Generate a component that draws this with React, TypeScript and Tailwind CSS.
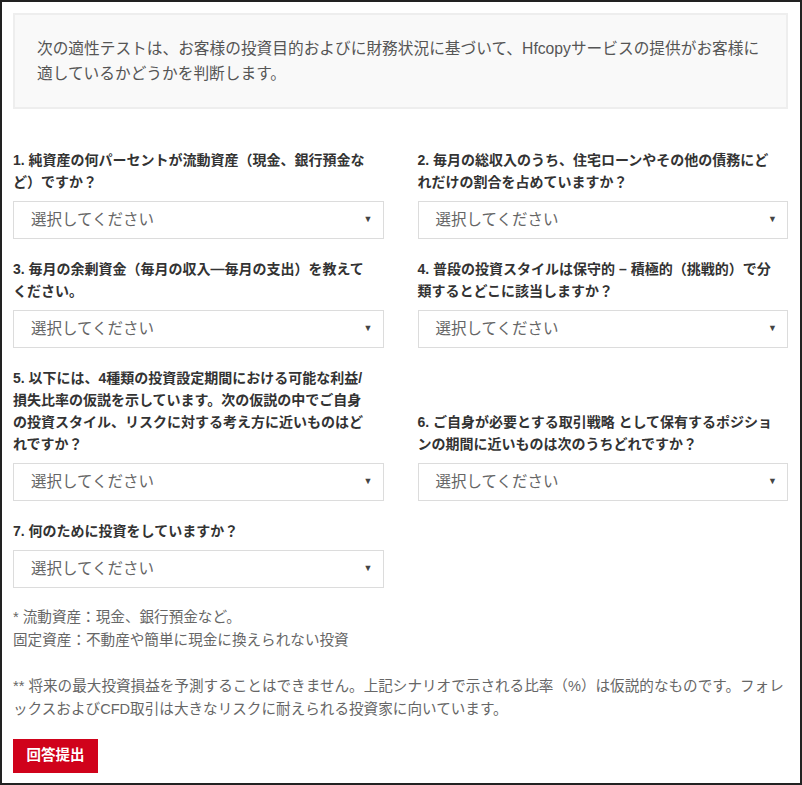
const font = {
  fontFamily: '"Liberation Sans", "Noto Sans CJK JP", sans-serif',
};

type Question = { lines: string[] };

const questions: Question[] = [
  { lines: ["1. 純資産の何パーセントが流動資産（現金、銀行預金な", "ど）ですか？"] },
  { lines: ["2. 毎月の総収入のうち、住宅ローンやその他の債務にど", "れだけの割合を占めていますか？"] },
  { lines: ["3. 毎月の余剰資金（毎月の収入—毎月の支出）を教えて", "ください。"] },
  { lines: ["4. 普段の投資スタイルは保守的 – 積極的（挑戦的）で分", "類するとどこに該当しますか？"] },
  {
    lines: [
      "5. 以下には、4種類の投資設定期間における可能な利益/",
      "損失比率の仮説を示しています。次の仮説の中でご自身",
      "の投資スタイル、リスクに対する考え方に近いものはど",
      "れですか？",
    ],
  },
  { lines: ["6. ご自身が必要とする取引戦略 として保有するポジショ", "ンの期間に近いものは次のうちどれですか？"] },
  { lines: ["7. 何のために投資をしていますか？"] },
];

function SelectBox() {
  return (
    <div className="flex h-[38px] items-center justify-between border border-[#dcdcdc] bg-white pl-[17px] pr-[10px]">
      <span className="text-[15.5px] text-[#666]">選択してください</span>
      <span className="text-[9px] text-[#444]">▼</span>
    </div>
  );
}

function QuestionField({ q }: { q: Question }) {
  return (
    <div className="flex flex-col">
      <label className="mb-[8px] text-[14px] font-bold leading-[22px] text-[#333]">
        {q.lines.map((l, i) => (
          <span key={i} className="block whitespace-nowrap">
            {l}
          </span>
        ))}
      </label>
      <SelectBox />
    </div>
  );
}

export default function App() {
  return (
    <div
      className="box-border h-[785px] w-[802px] border-2 border-[#222] bg-white pl-[11px] pr-[12px] pt-[11px]"
      style={font}
    >
      {/* intro */}
      <div className="border-2 border-[#eeeeee] bg-[#f9f9f9] px-[22px] py-[21px] text-[15.7px] leading-[25px] text-[#555]">
        次の適性テストは、お客様の投資目的およびに財務状況に基づいて、Hfcopyサービスの提供がお客様に
        <br />
        適しているかどうかを判断します。
      </div>

      {/* questions */}
      <div className="mt-[40px] grid grid-cols-2 items-end gap-x-[34px] gap-y-[19px]">
        {questions.map((q, i) => (
          <QuestionField key={i} q={q} />
        ))}
      </div>

      {/* notes */}
      <p className="mt-[18px] text-[14.6px] leading-[23px] text-[#666]">
        * 流動資産：現金、銀行預金など。
        <br />
        固定資産：不動産や簡単に現金に換えられない投資
        <br />
        <br />
        ** 将来の最大投資損益を予測することはできません。上記シナリオで示される比率（%）は仮説的なものです。フォレ
        <br />
        ックスおよびCFD取引は大きなリスクに耐えられる投資家に向いています。
      </p>

      <button className="mt-[18px] flex h-[34px] w-[85px] items-center justify-center bg-[#d0021b] text-[14.5px] font-bold text-white">
        回答提出
      </button>
    </div>
  );
}
